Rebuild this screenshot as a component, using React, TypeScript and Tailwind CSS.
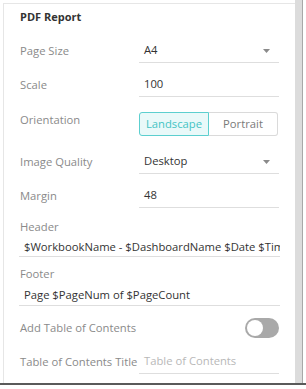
const font = { fontFamily: '"Open Sans", "Noto Sans", sans-serif' };

function Caret() {
  return (
    <svg width="7" height="4" viewBox="0 0 7 4" className="shrink-0">
      <path d="M0 0 L7 0 L3.5 4 Z" fill="#8a8a8a" />
    </svg>
  );
}

function Label({ children }: { children: React.ReactNode }) {
  return <span className="w-[119px] shrink-0 whitespace-nowrap text-[11.25px] text-[#8a8a8a]">{children}</span>;
}

function SelectRow({ label, value, className }: { label: string; value: string; className: string }) {
  return (
    <div className={`flex items-center ${className}`}>
      <Label>{label}</Label>
      <div className="flex h-[24px] w-[140px] items-center justify-between border-b border-[#dedede] pl-[5px] pr-[9px]">
        <span className="text-[11.25px] text-[#333]">{value}</span>
        <Caret />
      </div>
    </div>
  );
}

function InputRow({
  label,
  value,
  placeholder,
  className,
}: {
  label: string;
  value?: string;
  placeholder?: string;
  className: string;
}) {
  return (
    <div className={`flex items-center ${className}`}>
      <Label>{label}</Label>
      <div className="flex h-[24px] w-[140px] items-center border-b border-[#dedede] pl-[5px]">
        {value ? (
          <span className="text-[11.25px] text-[#333]">{value}</span>
        ) : (
          <span className="text-[11.25px] text-[#b8b8b8]">{placeholder}</span>
        )}
      </div>
    </div>
  );
}

function TextBlock({
  label,
  value,
  className,
  rowClass,
}: {
  label: string;
  value: string;
  className: string;
  rowClass: string;
}) {
  return (
    <div className={`flex flex-col ${className}`}>
      <span className="h-[16px] text-[11.25px] leading-[16px] text-[#8a8a8a]">{label}</span>
      <div className={`-ml-px flex w-[261px] items-center overflow-hidden border-b border-[#dedede] pl-[5px] pt-[3px] ${rowClass}`}>
        <span className="whitespace-nowrap text-[11.25px] text-[#333]">{value}</span>
      </div>
    </div>
  );
}

export default function App() {
  return (
    <div className="flex h-[389px] w-[306px] flex-col bg-white" style={font}>
      <div className="flex h-[383px]">
        <div className="ml-[3px] mt-[3px] flex w-[292px] flex-col border-l border-t border-[#e6e6e6] pl-[16px]">
          <h2 className="mt-[5px] h-[16px] text-[11px] font-bold leading-[16px] text-[#333]">PDF Report</h2>

          <SelectRow label="Page Size" value="A4" className="mt-[14px]" />
          <InputRow label="Scale" value="100" className="mt-[10px]" />

          <div className="mt-[15px] flex items-start">
            <span className="w-[119px] shrink-0 text-[11.25px] leading-[16px] text-[#8a8a8a]">Orientation</span>
            <div className="flex h-[24px] w-[139px]">
              <div className="flex w-[70px] items-center justify-center rounded-l-[3px] border border-[#5ccfcf] bg-[#e9f9f9] text-[11.25px] text-[#44c4c4]">
                Landscape
              </div>
              <div className="flex flex-1 items-center justify-center rounded-r-[3px] border border-l-0 border-[#dadada] text-[11.25px] text-[#7a7a7a]">
                Portrait
              </div>
            </div>
          </div>

          <SelectRow label="Image Quality" value="Desktop" className="mt-[14px]" />
          <InputRow label="Margin" value="48" className="mt-[10px]" />

          <TextBlock
            label="Header"
            value="$WorkbookName - $DashboardName $Date $Time"
            className="mt-[11px]"
            rowClass="h-[22px]"
          />
          <TextBlock
            label="Footer"
            value="Page $PageNum of $PageCount"
            className="mt-[9px]"
            rowClass="h-[24px]"
          />

          <div className="mt-[12px] flex h-[20px] w-[259px] items-center justify-between">
            <span className="text-[11.25px] text-[#8a8a8a]">Add Table of Contents</span>
            <div className="flex h-[20px] w-[34px] items-center rounded-full bg-[#a9a9a9] px-[2px]">
              <div className="h-[16px] w-[16px] rounded-full bg-white" />
            </div>
          </div>

          <InputRow label="Table of Contents Title" placeholder="Table of Contents" className="mt-[12px]" />
        </div>
        <div className="w-[7px] bg-[#dcdcdc]" />
        <div className="w-px bg-[#a8a8a8]" />
        <div className="flex-1" />
      </div>
      <div className="h-[2px] bg-[#5a5a5a]" />
    </div>
  );
}
